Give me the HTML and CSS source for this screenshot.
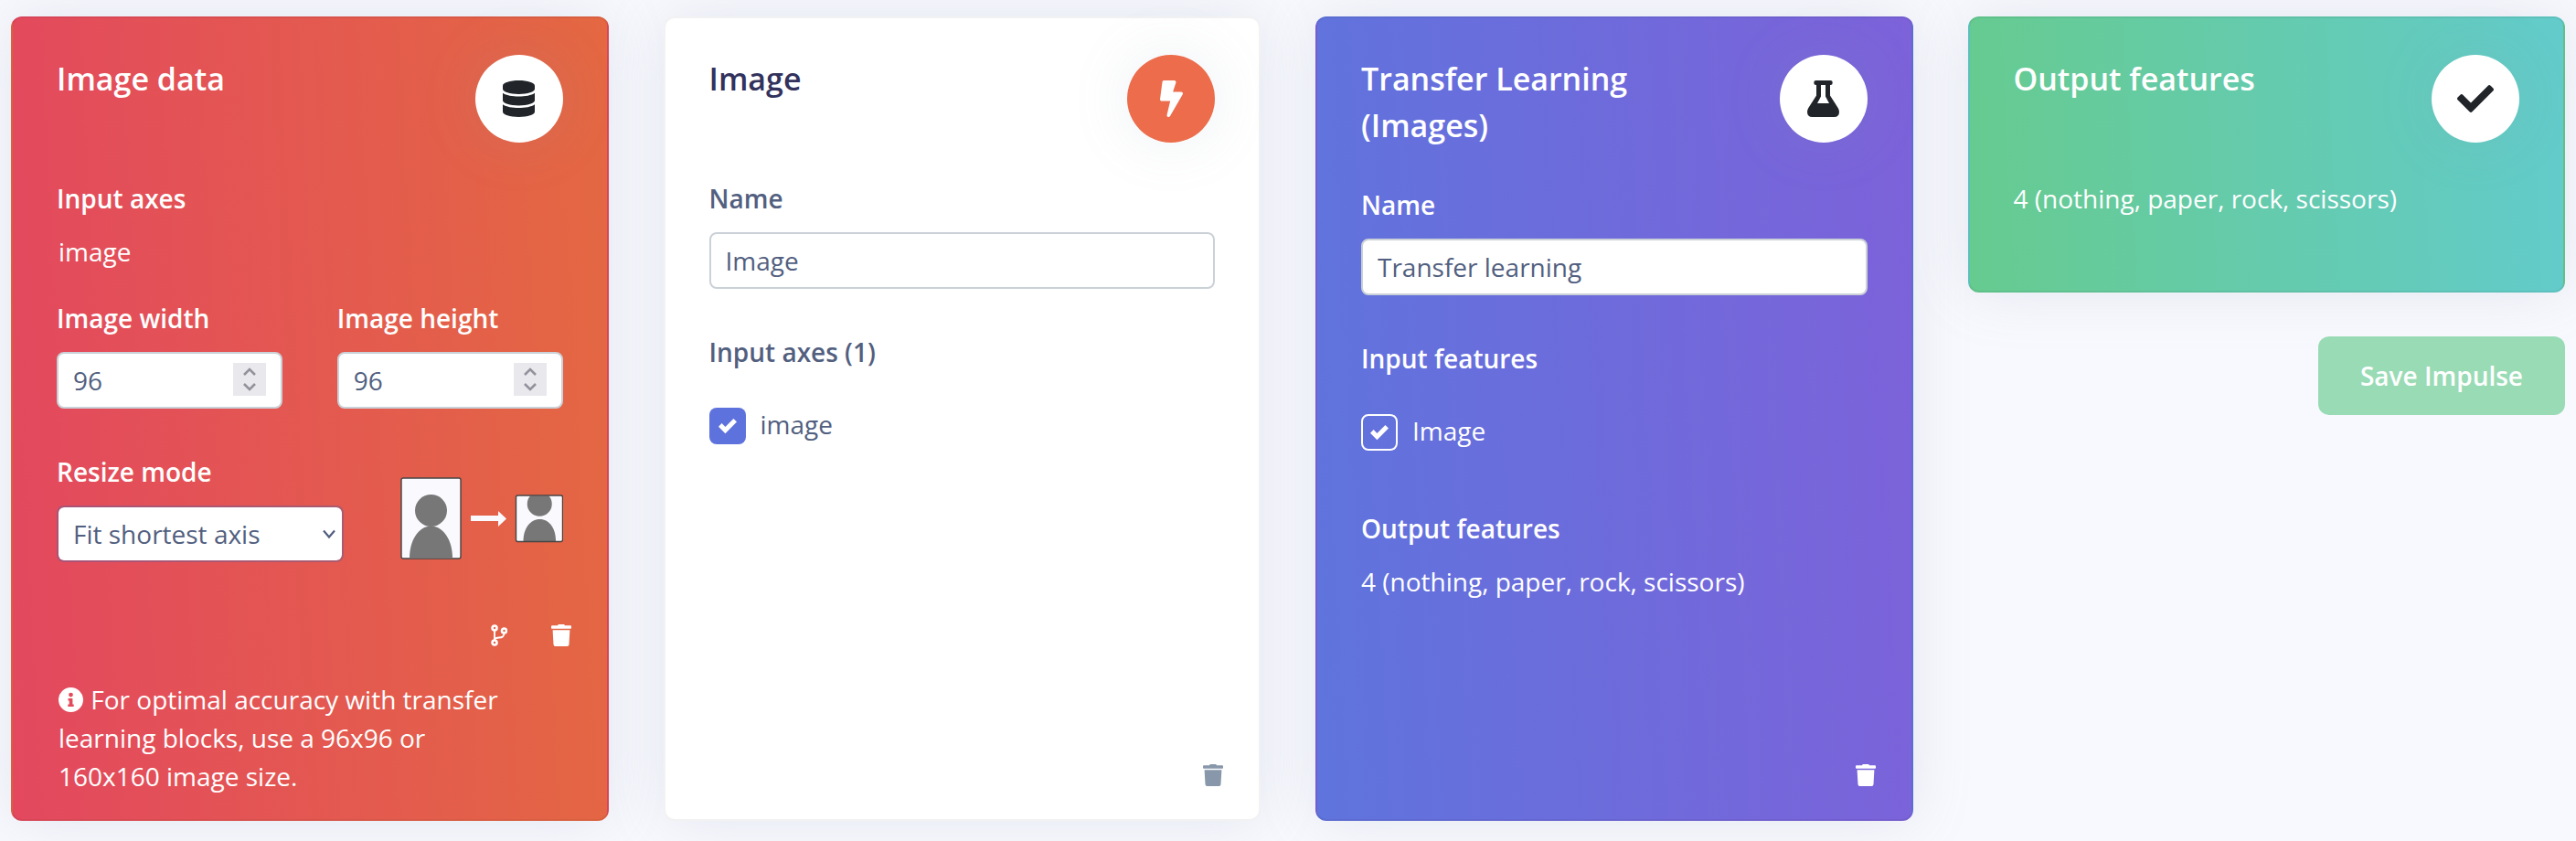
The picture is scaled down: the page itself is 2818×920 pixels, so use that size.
FILE: index.html
```
<!DOCTYPE html>
<html lang="en">
<head>
<meta charset="utf-8">
<meta name="viewport" content="width=device-width, initial-scale=1">
<title>Impulse design</title>
<link rel="stylesheet" href="styles.css">
</head>
<body>
<main class="impulse">

  <section class="card card-danger">
    <header class="card-header">
      <h2 class="card-title">Image data</h2>
      <span class="badge">
        <svg class="badge-icon" viewBox="0 0 448 512" aria-hidden="true"><path d="M448 73v46c0 40-100 73-224 73S0 159 0 119V73C0 33 100 0 224 0s224 33 224 73zM448 176v103c0 40-100 73-224 73S0 319 0 279V176c48 33 136 49 224 49s176-16 224-49zM448 336v103c0 40-100 73-224 73S0 479 0 439V336c48 33 136 49 224 49s176-16 224-49z"/></svg>
      </span>
    </header>
    <div class="field axes">
      <h3 class="label">Input axes</h3>
      <p class="text indent">image</p>
    </div>
    <div class="pair">
      <div class="field">
        <label class="label" for="width">Image width</label>
        <input class="control" id="width" type="number" value="96">
      </div>
      <div class="field">
        <label class="label" for="height">Image height</label>
        <input class="control" id="height" type="number" value="96">
      </div>
    </div>
    <div class="resize">
      <div class="field">
        <label class="label" for="mode">Resize mode</label>
        <select class="control select" id="mode"><option>Fit shortest axis</option></select>
      </div>
      <svg class="preview" viewBox="0 0 178 90" aria-hidden="true">
        <rect x="1" y="1" width="65" height="88" rx="2" fill="#faf9fe" stroke="#444" stroke-width="1.4"/>
        <circle cx="33.500" cy="36.500" r="17.500" fill="#777"/>
        <path d="M10 88.500C10 69 20 53.500 33.500 53.500S57 69 57 88.500z" fill="#777"/>
        <path d="M77 42h30v-5l9 8.500-9 8.500v-6H77z" fill="#faf9fe"/>
        <rect x="126.500" y="20" width="51" height="50.500" rx="2" fill="#faf9fe"/>
        <path d="M142 20.500h20.500a13.500 13.500 0 1 1-20.500 0z" fill="#777"/>
        <path d="M134.500 70C134.500 56 142 46 152.500 46S170 56 170 70z" fill="#777"/>
        <rect x="126.500" y="20" width="51" height="50.500" rx="2" fill="none" stroke="#444" stroke-width="1.400"/>
      </svg>
    </div>
    <div class="actions">
      <button class="icon-button" type="button" aria-label="Branch">
        <svg class="icon-branch" viewBox="0 0 18 24" aria-hidden="true"><g fill="none" stroke="currentColor"><circle cx="4" cy="4" r="2.500" stroke-width="2.600"/><circle cx="4" cy="20" r="2.500" stroke-width="2.600"/><circle cx="14.500" cy="7" r="2.500" stroke-width="2.600"/><path d="M4 6.500v11M14.500 9.500c0 6-5 4.500-8.500 5.500-1.500.5-2 1.500-2 2" stroke-width="1.900"/></g></svg>
      </button>
      <button class="icon-button" type="button" aria-label="Delete">
        <svg class="icon-trash" viewBox="0 0 22 24" aria-hidden="true"><path d="M7 1.200Q7.400 0 8.500 0h5q1.100 0 1.500 1.200h6q1 0 1 1V4q0 .8-.8.800H.8Q0 4.800 0 4V2.200q0-1 1-1zM1.600 6.200h18.800l-.9 15.800q-.1 2-2 2h-13q-1.900 0-2-2z" fill="currentColor"/></svg>
      </button>
    </div>
    <p class="text indent note"><svg class="icon-info" viewBox="0 0 27 27" aria-hidden="true"><path fill-rule="evenodd" fill="currentColor" d="M13.500 0a13.500 13.500 0 1 0 0 27 13.500 13.500 0 1 0 0-27zM13.500 5.700a2.400 2.400 0 1 1 0 4.800 2.400 2.400 0 1 1 0-4.800zM10.500 12h4.900v6.500h1.300V21h-6.400v-2.500h1.400v-4h-1.200z"/></svg> For optimal accuracy with transfer learning blocks, use a 96x96 or 160x160 image size.</p>
  </section>

  <section class="card card-plain">
    <header class="card-header">
      <h2 class="card-title">Image</h2>
      <span class="badge badge-orange">
        <svg class="badge-icon" viewBox="0 0 320 512" aria-hidden="true"><path d="M296 160H180.600l42.600-129.800C227.200 15 215.700 0 200 0H56C44 0 33.800 8.900 32.200 20.800l-32 240C-1.700 275.200 9.500 288 24 288h118.700L96.600 482.500c-3.600 15.200 8 29.500 23.300 29.500 8.400 0 16.400-4.400 20.800-12l176-304c9.300-15.900-2.200-36-20.700-36z"/></svg>
      </span>
    </header>
    <div class="field">
      <label class="label" for="dsp-name">Name</label>
      <input class="control" id="dsp-name" type="text" value="Image">
    </div>
    <fieldset class="group">
      <legend class="label">Input axes (1)</legend>
      <label class="check"><input class="box" type="checkbox" checked><span>image</span></label>
    </fieldset>
    <div class="actions actions-end">
      <button class="icon-button" type="button" aria-label="Delete">
        <svg class="icon-trash" viewBox="0 0 22 24" aria-hidden="true"><path d="M7 1.200Q7.400 0 8.500 0h5q1.100 0 1.500 1.200h6q1 0 1 1V4q0 .8-.8.800H.8Q0 4.800 0 4V2.200q0-1 1-1zM1.600 6.200h18.800l-.9 15.800q-.1 2-2 2h-13q-1.900 0-2-2z" fill="currentColor"/></svg>
      </button>
    </div>
  </section>

  <section class="card card-primary">
    <header class="card-header">
      <h2 class="card-title">Transfer Learning (Images)</h2>
      <span class="badge">
        <svg class="badge-icon" viewBox="0 0 35 40" aria-hidden="true"><path fill-rule="evenodd" d="M9.500 0h16q2.200 0 2.200 2.200v.6q0 2.200-2.200 2.200H25v11.500l8.800 13.700Q35 32.300 35 34.200 35 40 29.500 40h-24Q0 40 0 34.200q0-1.900 1.200-4L10 16.500V5h-.5Q7.300 5 7.300 2.800v-.6Q7.300 0 9.500 0zM15 5v12.500L11 25h13l-4-7.500V5z"/></svg>
      </span>
    </header>
    <div class="field">
      <label class="label" for="learn-name">Name</label>
      <input class="control" id="learn-name" type="text" value="Transfer learning">
    </div>
    <fieldset class="group">
      <legend class="label">Input features</legend>
      <label class="check"><input class="box box-outline" type="checkbox" checked><span>Image</span></label>
    </fieldset>
    <div class="field outputs">
      <h3 class="label">Output features</h3>
      <p class="text">4 (nothing, paper, rock, scissors)</p>
    </div>
    <div class="actions actions-end">
      <button class="icon-button" type="button" aria-label="Delete">
        <svg class="icon-trash" viewBox="0 0 22 24" aria-hidden="true"><path d="M7 1.200Q7.400 0 8.500 0h5q1.100 0 1.500 1.200h6q1 0 1 1V4q0 .8-.8.800H.8Q0 4.800 0 4V2.200q0-1 1-1zM1.600 6.200h18.800l-.9 15.800q-.1 2-2 2h-13q-1.900 0-2-2z" fill="currentColor"/></svg>
      </button>
    </div>
  </section>

  <div class="column">
    <section class="card card-success">
      <header class="card-header">
        <h2 class="card-title">Output features</h2>
        <span class="badge">
          <svg class="badge-icon" viewBox="0 0 512 512" aria-hidden="true"><path d="M173.900 439.400l-166.400-166.400c-10-10-10-26.200 0-36.200l36.200-36.200c10-10 26.200-10 36.200 0L192 312.700 432.100 72.600c10-10 26.200-10 36.200 0l36.200 36.200c10 10 10 26.200 0 36.200L210.100 439.400c-10 10-26.200 10-36.200 0z"/></svg>
        </span>
      </header>
      <p class="text">4 (nothing, paper, rock, scissors)</p>
    </section>
    <button class="save" type="button">Save Impulse</button>
  </div>

</main>
</body>
</html>
```
FILE: styles.css
```
* {
  box-sizing: border-box;
}

body {
  margin: 0;
  background: #f8f9fe;
  color: #525f7f;
  font-family: "Open Sans", sans-serif;
  font-size: 28px;
  line-height: 42px;
}

h2, h3, p {
  margin: 0;
}

button, input, select {
  font: inherit;
  color: inherit;
}

.impulse {
  display: grid;
  grid-template-columns: repeat(4, minmax(0, 1fr));
  gap: 60px;
  padding: 18px 12px 22px;
}

.card {
  display: flex;
  flex-direction: column;
  padding: 40px 48px 24px;
  border: 2px solid rgba(0, 0, 0, 0.05);
  border-radius: 12px;
  box-shadow: 0 0 64px rgba(136, 152, 170, 0.18);
  color: #fff;
}

.card-danger {
  background-image: linear-gradient(87deg, #e3485f, #e46842);
}

.card-plain {
  background-color: #fff;
  color: #525f7f;
}

.card-primary {
  background-image: linear-gradient(87deg, #5f74dd, #7d62da);
}

.card-success {
  padding-bottom: 80px;
  background-image: linear-gradient(87deg, #66cb8f, #63cbcb);
}

.card-header {
  display: flex;
  justify-content: space-between;
  align-items: flex-start;
  gap: 60px;
  margin-bottom: 40px;
}

.card-title {
  padding-top: 1px;
  font-size: 34px;
  font-weight: 600;
  line-height: 51px;
}

.card-plain .card-title {
  color: #32325d;
}

.badge {
  display: flex;
  flex: none;
  align-items: center;
  justify-content: center;
  width: 96px;
  height: 96px;
  border-radius: 50%;
  background: #fff;
  color: #212529;
  box-shadow: 0 0 64px rgba(136, 152, 170, 0.15);
}

.badge-orange {
  background: #ec6c4c;
  color: #fff;
}

.badge-icon {
  height: 40px;
  fill: currentColor;
}

.label {
  display: block;
  margin-bottom: 16px;
  padding: 0;
  font-size: 28px;
  font-weight: 600;
}

.indent {
  padding-left: 2px;
}

.axes {
  margin-bottom: 31px;
}

.control {
  display: block;
  width: 100%;
  height: 62px;
  padding: 0 16px;
  border: 2px solid #cad1d7;
  border-radius: 8px;
  background: #fff;
  color: #525f7f;
}

.control[type="number"]::-webkit-inner-spin-button {
  appearance: none;
  width: 36px;
  height: 36px;
  opacity: 1;
  background: #e9e8ed url("data:image/svg+xml,%3Csvg xmlns='http://www.w3.org/2000/svg' viewBox='0 0 36 36'%3E%3Cpath d='M12 13l6-6 6 6M12 23l6 6 6-6' fill='none' stroke='%2393929c' stroke-width='2.6'/%3E%3C/svg%3E");
}

.pair {
  display: grid;
  grid-template-columns: 1fr 1fr;
  gap: 60px;
  margin-bottom: 48px;
}

.resize {
  display: flex;
  justify-content: space-between;
  align-items: flex-end;
  margin-bottom: 56px;
}

.select {
  width: 314px;
  appearance: none;
  border-color: rgba(82, 95, 160, 0.4);
  background: #fff url("data:image/svg+xml,%3Csvg xmlns='http://www.w3.org/2000/svg' viewBox='0 0 16 12'%3E%3Cpath d='M2 2.500l6 7 6-7' fill='none' stroke='%23525f7f' stroke-width='2.200'/%3E%3C/svg%3E") no-repeat right 6px center / 16px 12px;
  background-clip: padding-box;
}

.preview {
  flex: none;
  width: 178px;
  height: 90px;
  margin-bottom: 3px;
}

.actions {
  display: flex;
  justify-content: flex-end;
  gap: 24px;
  margin-right: -21px;
}

.actions-end {
  margin-top: auto;
}

.icon-button {
  display: flex;
  padding: 12px;
  border: 0;
  background: none;
  color: #fff;
}

.card-plain .icon-button {
  color: #8898aa;
}

.icon-branch {
  width: 18px;
  height: 24px;
}

.icon-trash {
  width: 22px;
  height: 24px;
}

.note {
  margin: 25px 0 2px;
  padding-right: 40px;
}

.icon-info {
  width: 27px;
  height: 27px;
  margin-right: 1px;
  vertical-align: -3px;
}

.group {
  min-width: 0;
  margin: 48px 0 0;
  padding: 0;
  border: 0;
}

.check {
  display: flex;
  align-items: center;
  gap: 16px;
  margin-top: 20px;
}

.box {
  flex: none;
  width: 40px;
  height: 40px;
  margin: 4px 0 0;
  appearance: none;
  border-radius: 8px;
  background: #5e72dd url("data:image/svg+xml,%3Csvg xmlns='http://www.w3.org/2000/svg' viewBox='0 0 8 8'%3E%3Cpath fill='%23fff' d='M6.564.75l-3.59 3.612-1.538-1.550L0 4.260 2.974 7.250 8 2.193z'/%3E%3C/svg%3E") no-repeat center / 20px 20px;
}

.box-outline {
  border: 2px solid #fff;
  background-color: transparent;
}

.outputs {
  margin-top: 64px;
}

.column {
  display: flex;
  flex-direction: column;
  gap: 48px;
}

.save {
  align-self: flex-end;
  padding: 22px 46px;
  border: 0;
  border-radius: 12px;
  background: #99dbb5;
  color: #fff;
  font-weight: 600;
}
```
